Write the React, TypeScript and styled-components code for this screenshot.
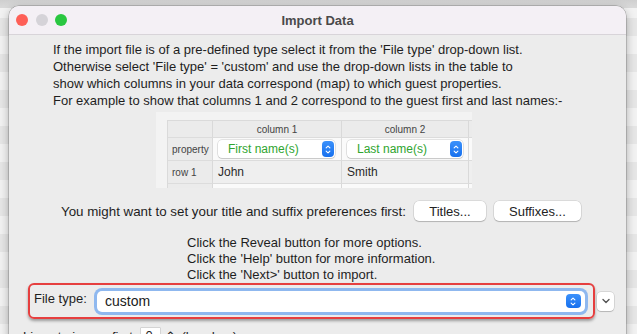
import styled, { createGlobalStyle } from "styled-components";

const GlobalStyle = createGlobalStyle`
  html, body {
    margin: 0;
    padding: 0;
  }
  body {
    width: 637px;
    height: 334px;
    overflow: hidden;
    font-family: "Liberation Sans", Arial, sans-serif;
  }
`;

const Desktop = styled.div`
  width: 637px;
  height: 334px;
  box-sizing: border-box;
  overflow: hidden;
  padding: 6px 11px 0 9px;
  background:
    linear-gradient(#cfcfcf, #dadada) top / 100% 8px no-repeat,
    repeating-linear-gradient(#f2f2f2 0 18px, #e6e6e6 18px 36px);
`;

const Window = styled.div`
  width: 617px;
  height: 345px;
  background: #ececec;
  border-radius: 10px 10px 0 0;
  box-shadow: 0 0 0 0.5px rgba(0, 0, 0, 0.3), 0 3px 10px rgba(0, 0, 0, 0.3);
  display: flex;
  flex-direction: column;
`;

const TitleBar = styled.div`
  height: 28px;
  flex-shrink: 0;
  background: #f4f0f5;
  border-bottom: 1px solid #d8d4d9;
  border-radius: 10px 10px 0 0;
  display: grid;
  grid-template-columns: 1fr auto 1fr;
  align-items: center;
`;

const Lights = styled.div`
  display: flex;
  gap: 7.5px;
  padding-left: 7px;
`;

const Light = styled.span<{ $color: string }>`
  width: 12px;
  height: 12px;
  border-radius: 50%;
  background: ${(p) => p.$color};
`;

const Title = styled.div`
  font-size: 13px;
  font-weight: 700;
  color: #4a4a4a;
`;

const Content = styled.div`
  display: flex;
  flex-direction: column;
  align-items: flex-start;
  color: #1e1e1e;
  font-size: 13px;
`;

const Intro = styled.p`
  margin: 5.5px 0 0 44px;
  line-height: 17px;
`;

const Figure = styled.div`
  margin: 3.5px 0 0 147px;
  width: 316px;
  height: 76px;
  box-sizing: border-box;
  padding: 8px 0 0 11px;
  background: #f3f3f3;
  overflow: hidden;
`;

const Grid = styled.div`
  display: grid;
  grid-template-columns: 45px 129px 127px 30px;
  grid-template-rows: 17px 23px 23px 23px;
  border-top: 1px solid #dadada;
  border-left: 1px solid #dadada;
  font-size: 10px;
  color: #444;
`;

const Cell = styled.div<{ $kind: "head" | "label" | "white" | "plain" }>`
  display: flex;
  align-items: center;
  justify-content: ${(p) => (p.$kind === "head" ? "center" : "flex-start")};
  padding: 0 ${(p) => (p.$kind === "label" ? "4px" : "5px")};
  border-right: 1px solid #d9d9d9;
  border-bottom: 1px solid #dcdcdc;
  background: ${(p) =>
    p.$kind === "white" ? "#fafafa" : p.$kind === "plain" ? "#efefef" : "#ebebeb"};
  font-size: ${(p) => (p.$kind === "plain" ? "12px" : "10px")};
  color: ${(p) => (p.$kind === "plain" ? "#2a2a2a" : "#444")};
`;

const MiniSelect = styled.div`
  width: 117px;
  height: 18px;
  box-sizing: border-box;
  background: #fff;
  border-radius: 4px;
  box-shadow: 0 0 0 0.5px rgba(0, 0, 0, 0.18), 0 1px 1px rgba(0, 0, 0, 0.12);
  display: flex;
  align-items: center;
  justify-content: space-between;
  padding: 0 1px 0 10px;
  font-size: 12px;
  color: #2fa52f;
`;

const Stepper = styled.span<{ $w: number; $h: number }>`
  width: ${(p) => p.$w}px;
  height: ${(p) => p.$h}px;
  border-radius: 4px;
  background: linear-gradient(#3b91fb, #1770ee);
  display: flex;
  align-items: center;
  justify-content: center;
`;

const PrefsRow = styled.div`
  margin: 13px 0 0 52px;
  display: flex;
  align-items: center;
  gap: 8px;
`;

const PrefsText = styled.span`
  font-size: 13.35px;
`;

const Button = styled.div<{ $w: number }>`
  width: ${(p) => p.$w}px;
  height: 20px;
  background: #fff;
  border-radius: 5px;
  box-shadow: 0 0 0 0.5px rgba(0, 0, 0, 0.15), 0 1px 1px rgba(0, 0, 0, 0.18);
  display: flex;
  align-items: center;
  justify-content: center;
  font-size: 13px;
  color: #222;
`;

const Info = styled.p`
  margin: 14px 0 0 178px;
  line-height: 16px;
`;

const FileTypeRow = styled.div`
  margin: 0 0 0 19px;
  display: flex;
  align-items: center;
  gap: 2px;
`;

const RedBox = styled.div`
  width: 567px;
  height: 36px;
  box-sizing: border-box;
  border: 2px solid #e63f3f;
  border-radius: 6px;
  box-shadow: 0 2px 3px rgba(0, 0, 0, 0.35);
  display: flex;
  align-items: center;
  justify-content: space-between;
  padding: 0 8px 0 4px;
`;

const Label = styled.span`
  margin-bottom: 6px;
  font-size: 13px;
`;

const Select = styled.div`
  width: 488px;
  height: 21px;
  box-sizing: border-box;
  background: #fff;
  border-radius: 5px;
  box-shadow: 0 0 0 3px #8fb8ef;
  display: flex;
  align-items: center;
  justify-content: space-between;
  padding: 0 4px 0 8px;
  font-size: 14px;
  color: #1a1a1a;
`;

const ChevronButton = styled.div`
  width: 17px;
  height: 19px;
  background: #fff;
  border-radius: 4px;
  box-shadow: 0 0 0 0.5px rgba(0, 0, 0, 0.18), 0 1px 1px rgba(0, 0, 0, 0.15);
  display: flex;
  align-items: center;
  justify-content: center;
`;

const IgnoreRow = styled.div`
  margin: 9px 0 0 14px;
  display: flex;
  align-items: center;
  gap: 5px;
  line-height: 16px;
`;

const SmallField = styled.span`
  width: 19px;
  height: 18px;
  background: #fff;
  box-shadow: 0 0 0 0.5px rgba(0, 0, 0, 0.2);
  padding-left: 4px;
  box-sizing: border-box;
`;

function UpDown({ size }: { size: number }) {
  return (
    <svg width={size * 0.55} height={size} viewBox="0 0 8 14" fill="none">
      <path d="M1.5 5 L4 2.5 L6.5 5" stroke="#fff" strokeWidth="1.4" strokeLinecap="round" strokeLinejoin="round" />
      <path d="M1.5 9 L4 11.5 L6.5 9" stroke="#fff" strokeWidth="1.4" strokeLinecap="round" strokeLinejoin="round" />
    </svg>
  );
}

export default function App() {
  return (
    <>
      <GlobalStyle />
      <Desktop>
        <Window>
          <TitleBar>
            <Lights>
              <Light $color="#fe5f57" />
              <Light $color="#d5d3d8" />
              <Light $color="#29c740" />
            </Lights>
            <Title>Import Data</Title>
            <div />
          </TitleBar>
          <Content>
            <Intro>
              If the import file is of a pre-defined type select it from the 'File type' drop-down list.
              <br />
              Otherwise select 'File type' = 'custom' and use the drop-down lists in the table to
              <br />
              show which columns in your data correspond (map) to which guest properties.
              <br />
              For example to show that columns 1 and 2 correspond to the guest first and last names:-
            </Intro>
            <Figure>
              <Grid>
                <Cell $kind="label" />
                <Cell $kind="head">column 1</Cell>
                <Cell $kind="head">column 2</Cell>
                <Cell $kind="head" />
                <Cell $kind="label">property</Cell>
                <Cell $kind="white">
                  <MiniSelect>
                    First name(s)
                    <Stepper $w={12} $h={16}>
                      <UpDown size={11} />
                    </Stepper>
                  </MiniSelect>
                </Cell>
                <Cell $kind="white">
                  <MiniSelect>
                    Last name(s)
                    <Stepper $w={12} $h={16}>
                      <UpDown size={11} />
                    </Stepper>
                  </MiniSelect>
                </Cell>
                <Cell $kind="white" />
                <Cell $kind="label">row 1</Cell>
                <Cell $kind="plain">John</Cell>
                <Cell $kind="plain">Smith</Cell>
                <Cell $kind="plain" />
                <Cell $kind="label" />
                <Cell $kind="white" />
                <Cell $kind="white" />
                <Cell $kind="white" />
              </Grid>
            </Figure>
            <PrefsRow>
              <PrefsText>You might want to set your title and suffix preferences first:</PrefsText>
              <Button $w={72}>Titles...</Button>
              <Button $w={87}>Suffixes...</Button>
            </PrefsRow>
            <Info>
              Click the Reveal button for more options.
              <br />
              Click the 'Help' button for more information.
              <br />
              Click the 'Next&gt;' button to import.
            </Info>
            <FileTypeRow>
              <RedBox>
                <Label>File type:</Label>
                <Select>
                  custom
                  <Stepper $w={15} $h={14}>
                    <UpDown size={11} />
                  </Stepper>
                </Select>
              </RedBox>
              <ChevronButton>
                <svg width="8" height="6" viewBox="0 0 8 6" fill="none">
                  <path d="M1 1.5 L4 4.5 L7 1.5" stroke="#555" strokeWidth="1.4" strokeLinecap="round" strokeLinejoin="round" />
                </svg>
              </ChevronButton>
            </FileTypeRow>
            <IgnoreRow>
              <span>Lines to ignore first:</span>
              <SmallField>0</SmallField>
              <span>⌃</span>
              <span>(headers)</span>
            </IgnoreRow>
          </Content>
        </Window>
      </Desktop>
    </>
  );
}
